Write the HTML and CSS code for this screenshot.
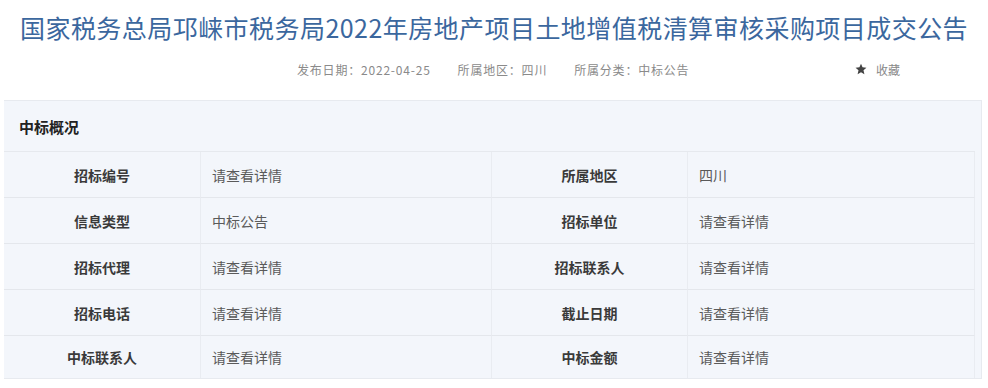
FILE: index.html
```html
<!DOCTYPE html>
<html lang="zh-CN">
<head>
    <meta charset="UTF-8">
    <title>中标公告</title>
    <link rel="stylesheet" href="styles.css">
</head>
<body>
    <h1 class="title">国家税务总局邛崃市税务局2022年房地产项目土地增值税清算审核采购项目成交公告</h1>
    <div class="meta">
        <span class="meta-item">发布日期：2022-04-25</span>
        <span class="meta-item">所属地区：四川</span>
        <span class="meta-item">所属分类：中标公告</span>
        <span class="fav">
            <svg width="12" height="12" viewBox="0 0 24 24"><path d="M12 1.5l3.1 7.2 7.8.7-5.9 5.2 1.8 7.7L12 18.3l-6.8 4 1.8-7.7L1.1 9.4l7.8-.7z" fill="#444"/></svg>
            收藏
        </span>
    </div>

    <div class="panel">
        <div class="panel-head">中标概况</div>
        <div class="info-table">
            <div class="cell label">招标编号</div>
            <div class="cell value">请查看详情</div>
            <div class="cell label">所属地区</div>
            <div class="cell value">四川</div>

            <div class="cell label">信息类型</div>
            <div class="cell value">中标公告</div>
            <div class="cell label">招标单位</div>
            <div class="cell value">请查看详情</div>

            <div class="cell label">招标代理</div>
            <div class="cell value">请查看详情</div>
            <div class="cell label">招标联系人</div>
            <div class="cell value">请查看详情</div>

            <div class="cell label">招标电话</div>
            <div class="cell value">请查看详情</div>
            <div class="cell label">截止日期</div>
            <div class="cell value">请查看详情</div>

            <div class="cell label last">中标联系人</div>
            <div class="cell value last">请查看详情</div>
            <div class="cell label last">中标金额</div>
            <div class="cell value last">请查看详情</div>
        </div>
    </div>
</body>
</html>
```

FILE: styles.css
```css
body {
    margin: 0;
    background: #fff;
    font-family: "Noto Sans CJK SC", "Noto Sans", sans-serif;
    color: #333;
}

.title {
    margin: 0;
    padding: 10px 0 0 20px;
    font-size: 25px;
    font-weight: normal;
    line-height: 34px;
    letter-spacing: 0.45px;
    color: #3b679e;
    white-space: nowrap;
}

.meta {
    display: flex;
    align-items: center;
    height: 20px;
    margin-top: 15px;
    padding: 0 88px 0 297px;
    font-size: 12px;
    letter-spacing: 0.8px;
    color: #8a8a8a;
}

.meta-item {
    margin-right: 27px;
}

.fav {
    margin-left: auto;
    display: flex;
    align-items: center;
    gap: 9px;
    letter-spacing: 0;
    color: #888;
}

.panel {
    margin: 21px 6px 0 4px;
    background: #f3f6fb;
    border: 1px solid #e7eaef;
    border-left: none;
    padding-right: 6px;
}

.panel-head {
    height: 50px;
    line-height: 52px;
    padding-left: 15px;
    font-size: 15px;
    font-weight: bold;
    color: #222;
    border-bottom: 1px solid #e6e9ee;
}

.info-table {
    display: grid;
    grid-template-columns: 197px 291px 196px 1fr;
}

.cell {
    height: 45px;
    display: flex;
    align-items: center;
    font-size: 14px;
    border-bottom: 1px solid #e4e7ec;
    border-right: 1px solid #e9ecf1;
}

.cell.last {
    border-bottom: none;
    height: 42px;
}

.label {
    justify-content: center;
    font-weight: bold;
    color: #3a3a3a;
}

.value {
    padding-left: 11px;
    color: #5a5a5a;
}
```
